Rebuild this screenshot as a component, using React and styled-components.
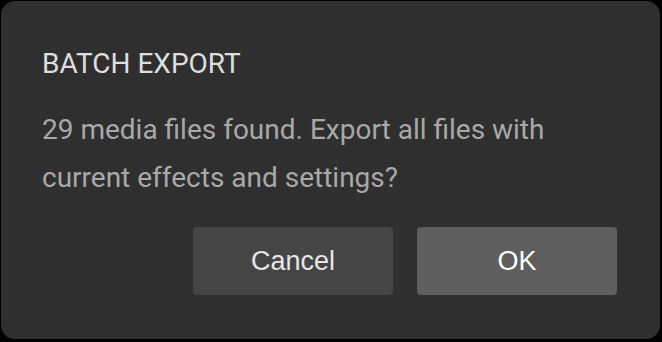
import React from "react";
import styled, { createGlobalStyle } from "styled-components";

const Global = createGlobalStyle`
  html, body { margin: 0; padding: 0; background: #000; }
  body { width: 662px; height: 342px; overflow: hidden; }
  #root { padding: 1px 2px 0 1px; box-sizing: border-box; width: 662px; height: 342px; }
`;

const Dialog = styled.div`
  box-sizing: border-box;
  width: 659px;
  height: 338px;
  background: #2f2f2f;
  border-radius: 14px;
  padding: 47px 43px 44px 41px;
  display: flex;
  flex-direction: column;
`;

const Title = styled.h1`
  margin: 0;
  font-family: Roboto, "Noto Sans", sans-serif;
  font-weight: 400;
  font-size: 28px;
  line-height: 32px;
  color: #dedede;
`;

const Message = styled.p`
  margin: 26px 0 0;
  font-family: Roboto, "Noto Sans", sans-serif;
  font-weight: 400;
  font-size: 28px;
  line-height: 48px;
  color: #a8a8a8;
`;

const Actions = styled.div`
  margin-top: auto;
  display: flex;
  justify-content: flex-end;
  gap: 24px;
`;

const Button = styled.button`
  width: 200px;
  height: 68px;
  border: none;
  border-radius: 4px;
  background: ${(p) => (p.$primary ? "#5e5e5e" : "#454545")};
  color: ${(p) => (p.$primary ? "#ffffff" : "#e6e6e6")};
  font-family: "Liberation Sans", Arial, sans-serif;
  font-size: 27px;
  padding: 0;
  display: flex;
  align-items: center;
  justify-content: center;
`;

export default function App() {
  return (
    <>
      <Global />
      <Dialog>
        <Title>BATCH EXPORT</Title>
        <Message>
          29 media files found. Export all files with
          <br />
          current effects and settings?
        </Message>
        <Actions>
          <Button>Cancel</Button>
          <Button $primary>OK</Button>
        </Actions>
      </Dialog>
    </>
  );
}
